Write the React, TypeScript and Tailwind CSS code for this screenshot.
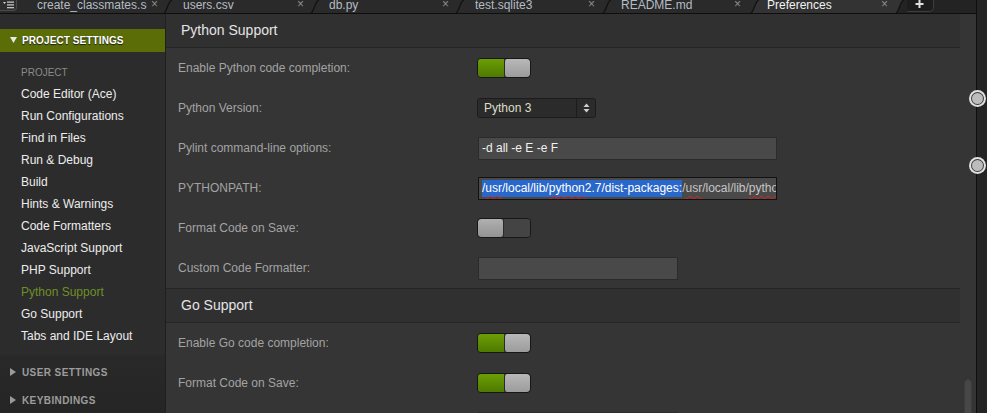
import React from "react";

type Tab = { name: string; w: string; pl: string; mr: string; active?: boolean };

const tabs: Tab[] = [
  { name: "create_classmates.sql", w: "w-[146px]", pl: "pl-[15px]", mr: "mr-[10px]" },
  { name: "users.csv", w: "w-[147px]", pl: "pl-[15px]", mr: "mr-[11px]" },
  { name: "db.py", w: "w-[145px]", pl: "pl-[14px]", mr: "mr-[11px]" },
  { name: "test.sqlite3", w: "w-[147px]", pl: "pl-[15px]", mr: "mr-[12px]" },
  { name: "README.md", w: "w-[148px]", pl: "pl-[14px]", mr: "mr-[14px]" },
  { name: "Preferences", w: "w-[145px]", pl: "pl-[12px]", mr: "mr-[12px]", active: true },
];

const navItems = [
  "Code Editor (Ace)",
  "Run Configurations",
  "Find in Files",
  "Run & Debug",
  "Build",
  "Hints & Warnings",
  "Code Formatters",
  "JavaScript Support",
  "PHP Support",
  "Python Support",
  "Go Support",
  "Tabs and IDE Layout",
];

function Sep({ left, right }: { left: string; right: string }) {
  return (
    <svg width="14" height="13" viewBox="0 0 14 13" className="absolute right-[-7px] top-0 z-10">
      <rect x="0" y="0" width="14" height="13" fill={left} />
      <path d="M3 13 C6 12 7 1 11 0 L14 0 L14 13 Z" fill={right} />
      <path d="M3 13 C6 12 7 1 11 0" stroke="#0f0f0f" strokeWidth="1.2" fill="none" />
    </svg>
  );
}

function TabBar() {
  return (
    <div className="h-[14px] shrink-0 flex bg-[#232323] border-b border-[#0e0e0e] overflow-hidden">
      <div className="w-[22px] shrink-0 h-[13px] bg-[#2a2a2a]">
        <div className="w-[17px] h-[11px] bg-[#2e2e2e] border border-t-0 border-l-0 border-[#4a4a4a] rounded-br-[4px] flex items-center justify-center">
          <svg width="11" height="8" viewBox="0 0 11 8">
            <path d="M0 1 L3 1 L1.5 3 Z" fill="#d0d0d0" />
            <rect x="4" y="0.5" width="7" height="1.2" fill="#d0d0d0" />
            <rect x="4" y="3.3" width="7" height="1.2" fill="#d0d0d0" />
            <rect x="4" y="6.1" width="7" height="1.2" fill="#d0d0d0" />
          </svg>
        </div>
      </div>
      {tabs.map((t, i) => {
        const bg = t.active ? "#333333" : "#2a2a2a";
        const next = tabs[i + 1];
        const nextBg = next ? (next.active ? "#333333" : "#2a2a2a") : "#232323";
        return (
          <div
            key={t.name}
            className={`relative h-[13px] shrink-0 flex items-start ${t.w} ${t.pl} ${t.active ? "bg-[#333333]" : "bg-[#2a2a2a]"}`}
          >
            <span
              className={`flex-1 min-w-0 overflow-x-clip whitespace-nowrap text-[12px] leading-[10px] ${
                t.active ? "text-[#f2f2f2]" : "text-[#b4bcc6]"
              }`}
            >
              {t.name}
            </span>
            <span className={`shrink-0 w-[7px] ml-[4px] text-[12px] leading-[9px] text-[#8e8e8e] ${t.mr}`}>×</span>
            <Sep left={bg} right={nextBg} />
          </div>
        );
      })}
      <div className="ml-[4px] w-[30px] h-[12px] shrink-0 bg-[#1d1d1d] border border-t-0 border-[#3e3e3e] rounded-b-[5px] flex items-start justify-center">
        <svg width="9" height="9" viewBox="0 0 9 9">
          <rect x="3.5" y="0" width="2" height="8" fill="#e0e0e0" />
          <rect x="0.5" y="3" width="8" height="2" fill="#e0e0e0" />
        </svg>
      </div>
    </div>
  );
}

function Sidebar() {
  return (
    <div className="w-[165px] shrink-0 bg-[#2c2c2c] flex flex-col border-r border-[#1f1f1f] box-content">
      <div className="h-[15px] shrink-0" />
      <div className="h-[23px] shrink-0 bg-[#5b6d06] flex items-center pl-[10px]">
        <svg width="8" height="7" viewBox="0 0 8 7" className="mr-[4px]">
          <path d="M0 0 L7 0 L3.5 6 Z" fill="#e8e8e8" />
        </svg>
        <span className="text-[10px] font-bold text-white tracking-[0.1px] [text-shadow:0_1px_1px_#1a1a1a]">
          PROJECT SETTINGS
        </span>
      </div>
      <div className="h-[10px] shrink-0" />
      <div className="h-[21px] shrink-0 flex items-center pl-[21px] text-[10px] text-[#8a8a8a]">PROJECT</div>
      {navItems.map((n) => (
        <div
          key={n}
          className={`h-[22px] shrink-0 flex items-center pl-[21px] text-[12px] ${
            n === "Python Support" ? "text-[#6e8f26]" : "text-[#ececec]"
          }`}
        >
          {n}
        </div>
      ))}
      <div className="mt-[8px] flex-1 bg-gradient-to-b from-[#292929] to-[#252525] pt-[3px]">
        {["USER SETTINGS", "KEYBINDINGS"].map((s) => (
          <div key={s} className="h-[28px] shrink-0 flex items-center pl-[10px]">
            <svg width="6" height="8" viewBox="0 0 6 8" className="mr-[6px]">
              <path d="M0 0 L6 4 L0 8 Z" fill="#9a9a9a" />
            </svg>
            <span className="text-[10px] font-bold text-[#9c9c9c] tracking-[0.4px]">{s}</span>
          </div>
        ))}
      </div>
    </div>
  );
}

function Toggle({ on }: { on: boolean }) {
  return (
    <div className="w-[54px] h-[20px] rounded-[4px] border border-[#171717] flex overflow-hidden">
      {on ? (
        <>
          <div className="w-[26px] bg-gradient-to-b from-[#6c9e06] to-[#4e7a00]" />
          <div className="flex-1 rounded-[3px] border-l border-[#2a2a2a] bg-gradient-to-b from-[#b8b8b8] to-[#9c9c9c]" />
        </>
      ) : (
        <>
          <div className="w-[26px] rounded-[3px] border-r border-[#2a2a2a] bg-gradient-to-b from-[#b0b0b0] to-[#939393]" />
          <div className="flex-1 bg-[#444444]" />
        </>
      )}
    </div>
  );
}

function Row({ label, children }: { label: string; children?: React.ReactNode }) {
  return (
    <div className="h-[40px] shrink-0 flex items-center">
      <div className="w-[311px] shrink-0 pl-[12px] text-[12px] text-[#a3a3a3]">{label}</div>
      <div className="flex items-center">{children}</div>
    </div>
  );
}

function TextInput({ value, w }: { value?: string; w: string }) {
  return (
    <div
      className={`ml-[1px] h-[23px] ${w} bg-[#494949] border border-[#2b2b2b] flex items-center px-[3px] text-[12px] text-[#f0f0f0] whitespace-nowrap overflow-hidden`}
    >
      {value}
    </div>
  );
}

function Squig({ children }: { children: React.ReactNode }) {
  return (
    <span className="underline decoration-wavy decoration-[#e01e1e] decoration-1 underline-offset-[3px]">
      {children}
    </span>
  );
}

function SectionHeader({ title, top }: { title: string; top?: boolean }) {
  return (
    <div
      className={`shrink-0 bg-[#303030] border-b border-[#252525] flex items-center pl-[15px] text-[14px] text-[#e4e4e4] ${
        top ? "h-[35px] border-t" : "h-[34px]"
      }`}
    >
      {title}
    </div>
  );
}

export default function App() {
  return (
    <div className="relative w-[987px] h-[413px] flex overflow-hidden bg-[#2c2c2c] font-['Liberation_Sans',Arial,sans-serif]">
      <div className="w-[976px] shrink-0 flex flex-col min-w-0">
        <TabBar />
        <div className="flex flex-1 min-h-0">
          <Sidebar />
          <div className="flex-1 flex bg-[#353535] min-w-0 overflow-hidden">
            <div className="w-[794px] shrink-0 flex flex-col">
              <SectionHeader title="Python Support" />
              <Row label="Enable Python code completion:">
                <Toggle on />
              </Row>
              <Row label="Python Version:">
                <div className="w-[119px] h-[20px] rounded-[3px] border border-[#1c1c1c] bg-[#2b2b2b] flex items-center">
                  <div className="w-[98px] pl-[6px] text-[12px] text-[#dcdfc6]">Python 3</div>
                  <div className="h-[18px] border-l border-[#1b1b1b] flex-1 flex items-center justify-center border-r-0">
                    <svg width="7" height="10" viewBox="0 0 7 10">
                      <path d="M0.5 4 L3.5 0.5 L6.5 4 Z" fill="#cfcfcf" />
                      <path d="M0.5 6 L3.5 9.5 L6.5 6 Z" fill="#cfcfcf" />
                    </svg>
                  </div>
                </div>
              </Row>
              <Row label="Pylint command-line options:">
                <TextInput w="w-[299px]" value="-d all -e E -e F" />
              </Row>
              <Row label="PYTHONPATH:">
                <div className="ml-[1px] h-[23px] w-[299px] bg-[#494949] border border-[#121212] flex items-center px-[3px] text-[12px] whitespace-nowrap overflow-hidden">
                  <span className="bg-[#2967ca] text-white leading-[17px]">
                    /<Squig>usr</Squig>/local/lib/<Squig>python</Squig>2.7/dist-packages:
                  </span>
                  <span className="text-[#c6c6c6]">
                    /<Squig>usr</Squig>/local/lib/<Squig>python2.7</Squig>/dist-packages
                  </span>
                </div>
              </Row>
              <Row label="Format Code on Save:">
                <Toggle on={false} />
              </Row>
              <Row label="Custom Code Formatter:">
                <TextInput w="w-[200px]" />
              </Row>
              <SectionHeader title="Go Support" top />
              <Row label="Enable Go code completion:">
                <Toggle on />
              </Row>
              <Row label="Format Code on Save:">
                <Toggle on />
              </Row>
              <Row label="Custom Code Formatter:">
                <TextInput w="w-[200px]" />
              </Row>
            </div>
            <div className="flex-1 relative">
              <div className="absolute left-[4px] top-[365px] w-[8px] h-[60px] rounded-[4px] bg-[#474747] border border-[#3c3c3c]" />
            </div>
          </div>
        </div>
      </div>
      <div className="flex-1 bg-[#242424] border-l border-[#0f0f0f]" />
      {[90, 157].map((t) => (
        <div
          key={t}
          className={`absolute left-[969px] w-[17px] h-[17px] rounded-full bg-[#e0e0e0] p-[2px] flex ${
            t === 90 ? "top-[90px]" : "top-[157px]"
          }`}
        >
          <div className="flex-1 rounded-full bg-[#3a3a3a] p-[1px] flex">
            <div className="flex-1 rounded-full bg-[#bcbcbc]" />
          </div>
        </div>
      ))}
    </div>
  );
}
